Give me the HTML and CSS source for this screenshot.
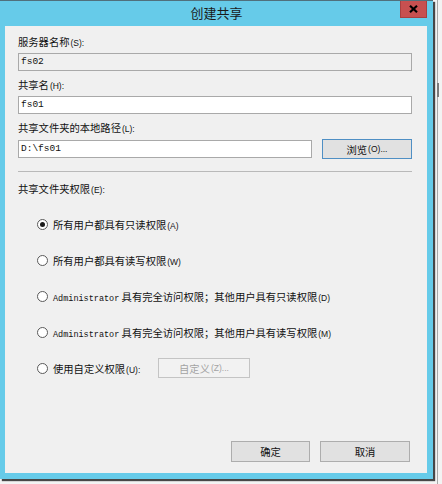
FILE: index.html
```html
<!DOCTYPE html>
<html lang="zh-CN">
<head>
<meta charset="utf-8">
<title>创建共享</title>
<link rel="stylesheet" href="styles.css">
</head>
<body>
<div class="window">
  <div class="titlebar">
    <div></div>
    <div class="title">创建共享</div>
    <div class="close">
      <svg width="9" height="8" viewBox="0 0 9 8"><path d="M1 0.8 L8 7.2 M8 0.8 L1 7.2" stroke="#000" stroke-width="2.2" fill="none"/></svg>
    </div>
  </div>
  <div class="panel">
    <div class="label">服务器名称<span class="acc">(S):</span></div>
    <div class="input readonly">fs02</div>
    <div class="label">共享名<span class="acc">(H):</span></div>
    <div class="input">fs01</div>
    <div class="label">共享文件夹的本地路径<span class="acc">(L):</span></div>
    <div class="path-row">
      <div class="input path">D:\fs01</div>
      <div class="btn btn-focus">浏览<span class="acc">(O)...</span></div>
    </div>
    <div class="separator"></div>
    <div class="label label-perm">共享文件夹权限<span class="acc">(E):</span></div>
    <div class="radios">
      <div class="radio-row"><span class="radio checked"></span><span>所有用户都具有只读权限<span class="acc">(A)</span></span></div>
      <div class="radio-row"><span class="radio"></span><span>所有用户都具有读写权限<span class="acc">(W)</span></span></div>
      <div class="radio-row"><span class="radio"></span><span><span class="mono">Administrator</span> 具有完全访问权限；其他用户具有只读权限<span class="acc">(D)</span></span></div>
      <div class="radio-row"><span class="radio"></span><span><span class="mono">Administrator</span> 具有完全访问权限；其他用户具有读写权限<span class="acc">(M)</span></span></div>
      <div class="radio-row"><span class="radio"></span><span class="custom-label">使用自定义权限<span class="acc">(U):</span></span><div class="btn btn-disabled">自定义<span class="acc">(Z)...</span></div></div>
    </div>
    <div class="footer">
      <div class="btn btn-ok">确定</div>
      <div class="btn btn-cancel">取消</div>
    </div>
  </div>
</div>
</body>
</html>
```

FILE: styles.css
```css
html, body {
  margin: 0;
  padding: 0;
}
body {
  width: 442px;
  height: 484px;
  overflow: hidden;
  background:
    linear-gradient(to bottom, transparent 83px, #7a7a7a 83px, #7a7a7a 97px, transparent 97px) no-repeat 437px 0 / 2px 100%,
    linear-gradient(to right, transparent 437px, #a8a8a8 437px, #a8a8a8 438px, transparent 438px),
    #f3f3f3;
  font-family: "Noto Sans CJK SC", "Noto Sans", sans-serif;
  font-size: 10.3px;
  color: #111;
}
.window {
  width: 433px;
  height: 479px;
  box-sizing: border-box;
  background: #66cbe9;
  border-top: 1px solid #50707c;
  box-shadow: 2px 2px 1px rgba(40, 40, 40, 0.85);
  display: flex;
  flex-direction: column;
}
.titlebar {
  height: 25px;
  display: grid;
  grid-template-columns: 1fr auto 1fr;
  align-items: start;
}
.title {
  font-size: 13px;
  line-height: 24px;
  color: #1b1b1b;
}
.close {
  justify-self: end;
  margin-right: 6px;
  width: 27px;
  height: 17px;
  box-sizing: border-box;
  background: #c75050;
  border: 1px solid #a84040;
  border-top: none;
  display: flex;
  align-items: center;
  justify-content: center;
}
.panel {
  flex: 1;
  margin: 0 6px 6px 5px;
  background: #f0f0f0;
  box-sizing: border-box;
  padding: 8px 15px 11px 13px;
  display: flex;
  flex-direction: column;
}
.label {
  line-height: 16px;
  height: 16px;
  margin-top: 6px;
  margin-bottom: 3px;
  white-space: nowrap;
}
.label:first-child {
  margin-top: 0;
}
.acc {
  font-family: "Liberation Sans", sans-serif;
  font-size: 8.5px;
  margin-left: 1px;
}
.mono {
  font-family: "Liberation Mono", monospace;
  font-size: 8.5px;
}
.input {
  height: 18px;
  box-sizing: border-box;
  border: 1px solid #a9a9a9;
  background: #fff;
  font-family: "Liberation Mono", monospace;
  font-size: 9.5px;
  line-height: 16px;
  padding-left: 2px;
}
.input.readonly {
  background: #f0f0f0;
}
.path-row {
  display: flex;
  align-items: center;
  height: 20px;
}
.input.path {
  width: 294px;
}
.btn {
  box-sizing: border-box;
  background: #e1e1e1;
  border: 1px solid #adadad;
  display: flex;
  align-items: center;
  justify-content: center;
  white-space: nowrap;
}
.btn-focus {
  margin-left: 10px;
  width: 90px;
  height: 20px;
  border-color: #4f8fc4;
}
.separator {
  height: 1px;
  background: #b9b9b9;
  margin-top: 12px;
}
.label.label-perm {
  margin-top: 9px;
  margin-bottom: 0;
}
.radios {
  display: flex;
  flex-direction: column;
  gap: 16px;
  margin-top: 17px;
  padding-left: 19px;
}
.radio-row {
  height: 20px;
  display: flex;
  align-items: center;
  white-space: nowrap;
}
.radio {
  width: 11px;
  height: 11px;
  box-sizing: border-box;
  border: 1px solid #5a5a5a;
  border-radius: 50%;
  background: #fff;
  margin-right: 5px;
  display: flex;
  align-items: center;
  justify-content: center;
  flex: none;
}
.radio.checked::after {
  content: "";
  width: 5px;
  height: 5px;
  border-radius: 50%;
  background: #1a1a1a;
}
.custom-label {
  width: 105px;
}
.btn-disabled {
  width: 92px;
  height: 20px;
  background: #f2f2f2;
  border-color: #c4c4c4;
  color: #a3a3a3;
}
.footer {
  margin-top: auto;
  display: flex;
  justify-content: flex-end;
  gap: 10px;
  margin-right: 2px;
}
.btn-ok {
  width: 79px;
  height: 21px;
}
.btn-cancel {
  width: 90px;
  height: 21px;
}
```
